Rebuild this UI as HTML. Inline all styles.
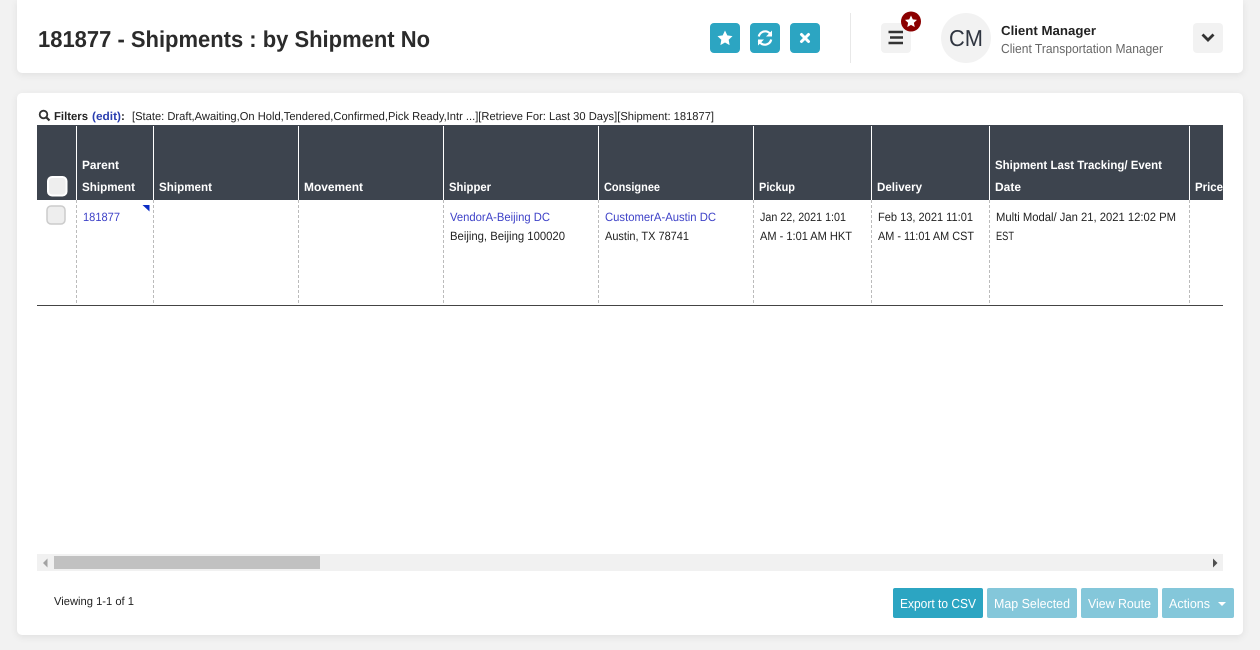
<!DOCTYPE html>
<html lang="en"><head><meta charset="utf-8"><title>Shipments</title>
<style>
html,body{margin:0;padding:0;width:1260px;height:650px;overflow:hidden;background:#f2f2f2}
.card{position:absolute;background:#fff;box-shadow:0 2px 8px rgba(0,0,0,.08)}
svg{position:absolute;left:0;top:0}
text{font-family:"Liberation Sans",sans-serif;font-size:12px;fill:#222;text-rendering:geometricPrecision}
.b{font-weight:700}.h{font-weight:700;fill:#fff;font-size:12px}.l{fill:#3f43c8}.w{fill:#fff;font-size:13px}
</style></head><body>
<div class="card" style="left:17px;top:0;width:1226px;height:73px;border-radius:0 0 5px 5px"></div>
<div class="card" style="left:17px;top:93px;width:1226px;height:542px;border-radius:5px"></div>
<svg width="1260" height="650" viewBox="0 0 1260 650" xmlns="http://www.w3.org/2000/svg">
<text x="38" y="47" class="b" style="font-size:23px;fill:#2b2b2b" textLength="392" lengthAdjust="spacingAndGlyphs">181877 - Shipments : by Shipment No</text>
<rect x="710" y="23" width="30" height="30" rx="4" fill="#2ca5c2"/>
<rect x="750" y="23" width="30" height="30" rx="4" fill="#2ca5c2"/>
<rect x="790" y="23" width="30" height="30" rx="4" fill="#2ca5c2"/>
<path d="M725 30.500l2.300 4.900 5.200.7-3.800 3.700.9 5.300-4.600-2.600-4.600 2.600.9-5.300-3.800-3.700 5.200-.7z" fill="#fff"/>
<g fill="none" stroke="#fff" stroke-width="2.200"><path d="M758.800 36.500a6.500 6.500 0 0 1 11-3.200l1.700 1.700"/><path d="M771.200 39.500a6.500 6.500 0 0 1-11 3.200l-1.700-1.700"/></g>
<path d="M772 30.500v6h-6zM758 45.500v-6h6z" fill="#fff"/>
<path d="M801.500 34.500l7 7m0-7l-7 7" stroke="#fff" stroke-width="3" stroke-linecap="round"/>
<rect x="850" y="13" width="1" height="50" fill="#e8e8e8"/>
<rect x="881" y="23" width="30" height="30" rx="4" fill="#f2f2f2"/>
<path d="M888.500 32h14.500M890 37.500h13M888.500 43h14.500" stroke="#333" stroke-width="2.600"/>
<circle cx="911" cy="21.500" r="10" fill="#8b0000"/>
<path d="M911 15.500l1.800 3.900 4.200.5-3.100 2.900.8 4.200-3.700-2.100-3.700 2.100.8-4.200-3.100-2.900 4.200-.5z" fill="#fff"/>
<circle cx="966" cy="38" r="25" fill="#f2f2f2"/>
<text x="949" y="46" style="font-size:23px;fill:#2f3540" textLength="34" lengthAdjust="spacingAndGlyphs">CM</text>
<text x="1001" y="35" class="b" style="font-size:13px" textLength="95" lengthAdjust="spacingAndGlyphs">Client Manager</text>
<text x="1001" y="53" style="font-size:13px;fill:#666" textLength="162" lengthAdjust="spacingAndGlyphs">Client Transportation Manager</text>
<rect x="1193" y="23" width="30" height="30" rx="4" fill="#f2f2f2"/>
<path d="M1202.500 34.500l5.500 5.500 5.500-5.500" fill="none" stroke="#333" stroke-width="2.800"/>

<circle cx="43.500" cy="114.500" r="3.800" fill="none" stroke="#333" stroke-width="1.800"/>
<path d="M46.300 117.300l3.200 3.200" stroke="#333" stroke-width="2.200"/>
<text x="54" y="120" class="b" textLength="34" lengthAdjust="spacingAndGlyphs" style="font-size:11.500px">Filters</text>
<text x="92" y="120" class="b" style="font-size:11.500px;fill:#2b3fb0" textLength="29" lengthAdjust="spacingAndGlyphs">(edit)</text>
<text x="121" y="120" class="b" style="font-size:11.500px">:</text>
<text x="132" y="120" style="font-size:11.500px" textLength="582" lengthAdjust="spacingAndGlyphs">[State: Draft,Awaiting,On Hold,Tendered,Confirmed,Pick Ready,Intr ...][Retrieve For: Last 30 Days][Shipment: 181877]</text>

<rect x="37" y="125" width="1186" height="75" fill="#3d444e"/>
<g fill="#fff">
<rect x="76" y="126" width="1" height="74"/><rect x="153" y="126" width="1" height="74"/><rect x="298" y="126" width="1" height="74"/><rect x="443" y="126" width="1" height="74"/><rect x="598" y="126" width="1" height="74"/><rect x="753" y="126" width="1" height="74"/><rect x="871" y="126" width="1" height="74"/><rect x="989" y="126" width="1" height="74"/><rect x="1189" y="126" width="1" height="74"/>
</g>
<g stroke="#bbb" stroke-dasharray="3 2">
<path d="M76.500 200v105M153.500 200v105M298.500 200v105M443.500 200v105M598.500 200v105M753.500 200v105M871.500 200v105M989.500 200v105M1189.500 200v105"/>
</g>
<rect x="37" y="305" width="1186" height="1" fill="#444"/>

<rect x="48" y="177" width="18.500" height="18.500" rx="4" fill="#eee" stroke="#fff" stroke-width="2"/>
<rect x="47" y="206" width="18" height="18" rx="4" fill="#eee" stroke="#ccc" stroke-width="1.500"/>
<path d="M142.500 205h7v6.500z" fill="#0b2cc4"/>

<text x="82" y="169" class="h" textLength="37" lengthAdjust="spacingAndGlyphs">Parent</text>
<text x="82" y="191" class="h" textLength="53" lengthAdjust="spacingAndGlyphs">Shipment</text>
<text x="159" y="191" class="h" textLength="53" lengthAdjust="spacingAndGlyphs">Shipment</text>
<text x="304" y="191" class="h" textLength="59" lengthAdjust="spacingAndGlyphs">Movement</text>
<text x="449" y="191" class="h" textLength="42" lengthAdjust="spacingAndGlyphs">Shipper</text>
<text x="604" y="191" class="h" textLength="56" lengthAdjust="spacingAndGlyphs">Consignee</text>
<text x="759" y="191" class="h" textLength="36" lengthAdjust="spacingAndGlyphs">Pickup</text>
<text x="877" y="191" class="h" textLength="45" lengthAdjust="spacingAndGlyphs">Delivery</text>
<text x="995" y="169" class="h" textLength="167" lengthAdjust="spacingAndGlyphs">Shipment Last Tracking/ Event</text>
<text x="995" y="191" class="h" textLength="26" lengthAdjust="spacingAndGlyphs">Date</text>
<text x="1195" y="191" class="h" textLength="28" lengthAdjust="spacingAndGlyphs">Price</text>

<text x="83" y="221" class="l" textLength="37" lengthAdjust="spacingAndGlyphs">181877</text>
<text x="450" y="221" class="l" textLength="100" lengthAdjust="spacingAndGlyphs">VendorA-Beijing DC</text>
<text x="450" y="240" textLength="115" lengthAdjust="spacingAndGlyphs">Beijing, Beijing 100020</text>
<text x="605" y="221" class="l" textLength="111" lengthAdjust="spacingAndGlyphs">CustomerA-Austin DC</text>
<text x="605" y="240" textLength="84" lengthAdjust="spacingAndGlyphs">Austin, TX 78741</text>
<text x="760" y="221" textLength="86" lengthAdjust="spacingAndGlyphs">Jan 22, 2021 1:01</text>
<text x="760" y="240" textLength="92" lengthAdjust="spacingAndGlyphs">AM - 1:01 AM HKT</text>
<text x="878" y="221" textLength="95" lengthAdjust="spacingAndGlyphs">Feb 13, 2021 11:01</text>
<text x="878" y="240" textLength="96" lengthAdjust="spacingAndGlyphs">AM - 11:01 AM CST</text>
<text x="996" y="221" textLength="180" lengthAdjust="spacingAndGlyphs">Multi Modal/ Jan 21, 2021 12:02 PM</text>
<text x="996" y="240" textLength="18" lengthAdjust="spacingAndGlyphs">EST</text>

<rect x="37" y="554" width="1186" height="17" fill="#f1f1f1"/>
<rect x="54" y="556" width="266" height="13" fill="#c1c1c1"/>
<path d="M47.500 558.500v9l-4.500-4.500z" fill="#a3a3a3"/>
<path d="M1213 558.500v9l4.500-4.500z" fill="#505050"/>

<text x="54" y="605" style="font-size:11.500px" textLength="80" lengthAdjust="spacingAndGlyphs">Viewing 1-1 of 1</text>

<rect x="893" y="588" width="90" height="30" rx="2" fill="#2ca5c2"/>
<rect x="987" y="588" width="90" height="30" rx="2" fill="#84c7da"/>
<rect x="1081" y="588" width="77" height="30" rx="2" fill="#84c7da"/>
<rect x="1162" y="588" width="72" height="30" rx="2" fill="#84c7da"/>
<text x="900" y="608" class="w" textLength="76" lengthAdjust="spacingAndGlyphs">Export to CSV</text>
<text x="994" y="608" class="w" textLength="76" lengthAdjust="spacingAndGlyphs">Map Selected</text>
<text x="1088" y="608" class="w" textLength="63" lengthAdjust="spacingAndGlyphs">View Route</text>
<text x="1169" y="608" class="w" textLength="41" lengthAdjust="spacingAndGlyphs">Actions</text>
<path d="M1218 602h8l-4 4z" fill="#fff"/>
</svg>
</body></html>
